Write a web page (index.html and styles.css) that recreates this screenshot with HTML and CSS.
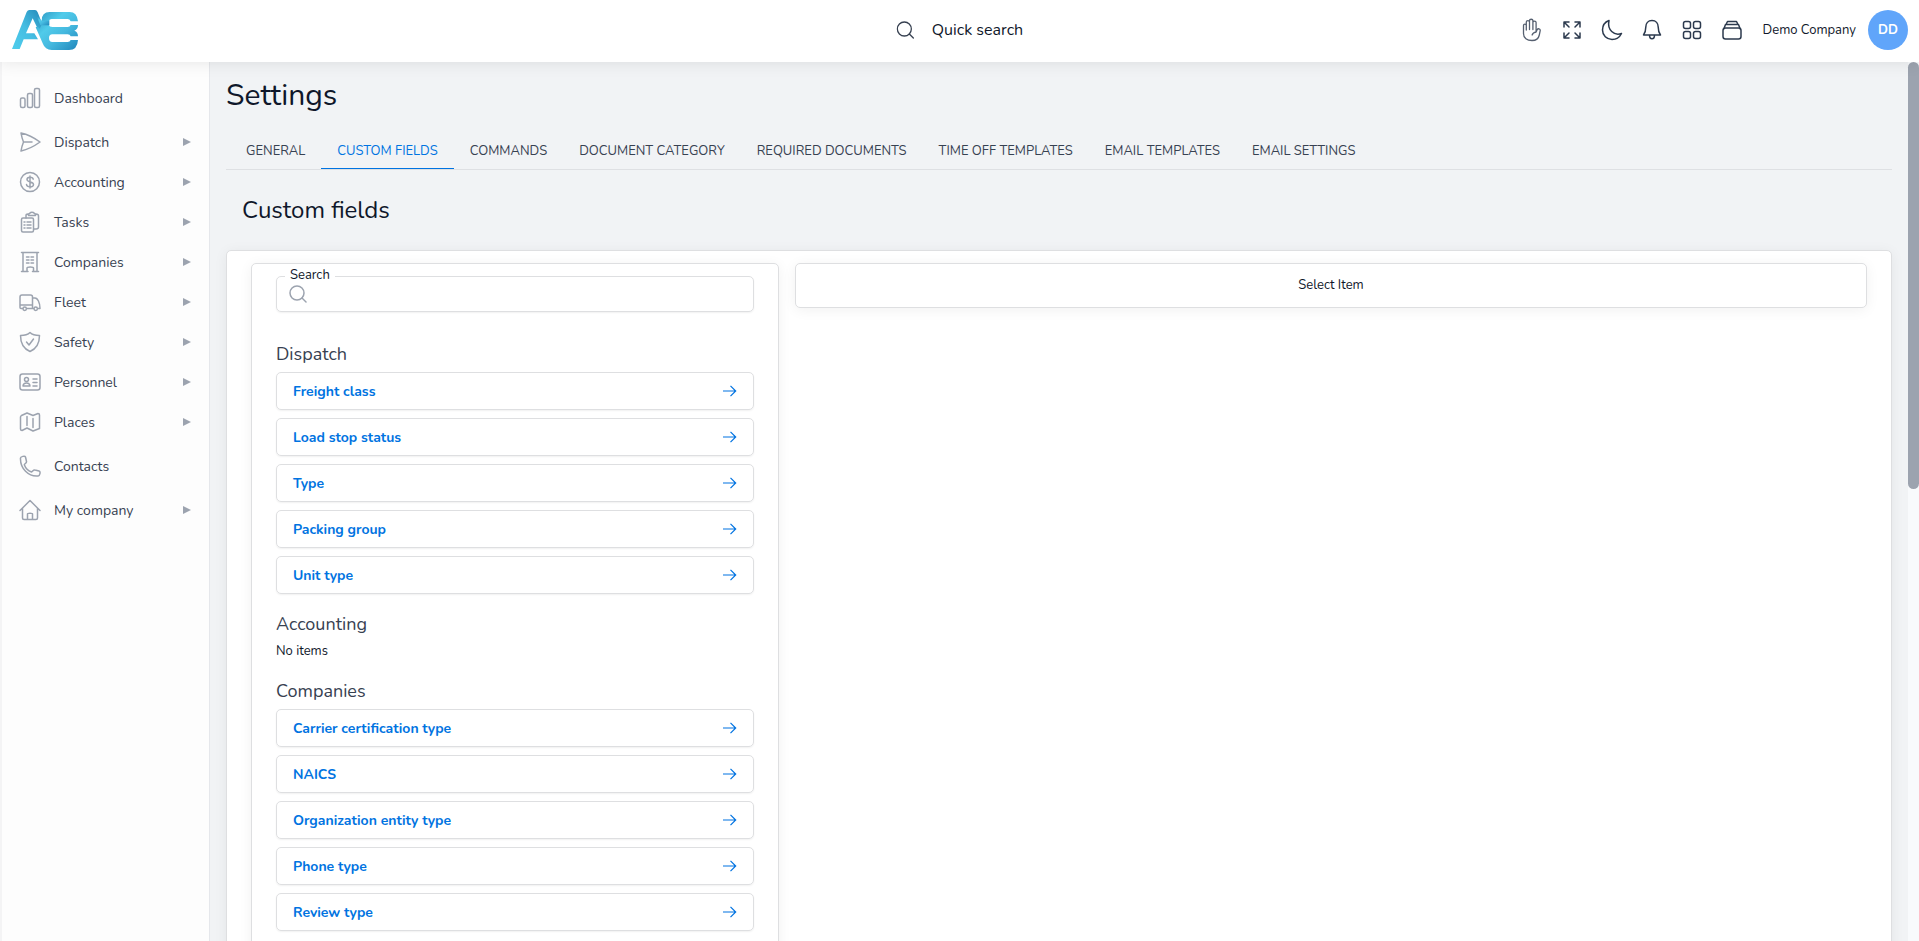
FILE: index.html
```html
<!DOCTYPE html>
<html lang="en">

<head>
  <meta charset="UTF-8">
  <title>Settings</title>
  <link rel="stylesheet" href="styles.css">
</head>

<body>
  <svg class="sprite" aria-hidden="true">
    <symbol id="i-search" viewBox="0 0 18 18">
      <circle cx="8" cy="8" r="7" /><path d="M13 13l4 4" />
    </symbol>
    <symbol id="i-arrow" viewBox="0 0 14 12">
      <path d="M0 6h13M7.500.8L12.700 6l-5.200 5.200" />
    </symbol>
    <symbol id="i-caret" viewBox="0 0 8 8">
      <path d="M0 0l8 4-8 4z" />
    </symbol>
  </svg>

  <header class="header">
    <a class="logo" href="#" aria-label="Home">
      <svg viewBox="39 30 198 120" width="66" height="40">
        <defs>
          <linearGradient id="logo-a" x1="0" y1="1" x2="1" y2="0">
            <stop offset="0" stop-color="#4fcdec" />
            <stop offset=".5" stop-color="#45bde2" />
            <stop offset="1" stop-color="#2288b8" />
          </linearGradient>
          <linearGradient id="logo-b" x1="0" y1="0" x2="1" y2="1">
            <stop offset="0" stop-color="#2a93c0" />
            <stop offset=".35" stop-color="#50cbea" />
            <stop offset=".6" stop-color="#45b9df" />
            <stop offset="1" stop-color="#1f86bb" />
          </linearGradient>
        </defs>
        <path fill="url(#logo-a)" d="M39 147L83 36Q86 30 91 30H108Q113 30 116 37L130 72 122 98 101 55 81 100H106L117 118H74L62 147Z" />
        <path fill="url(#logo-b)" fill-rule="evenodd" d="M128 62Q128 36 152 36H212Q234 36 237 64H215Q212 57 206 57H158Q151 57 150 64H132ZM128 74H149Q151 81 160 81H206Q213 81 215 75H237Q237 88 226 92Q237 96 237 109H215Q213 103 206 103H160Q150 103 150 114Q150 126 160 126H206Q213 126 215 120H237Q235 150 210 150H158Q138 149 132 132L110 82Q116 77 122 86Z" />
        <path fill="url(#logo-b)" d="M113 48L129 62H151V76H124Z" />
      </svg>
    </a>
    <button class="quick-search" type="button">
      <svg class="icon" width="18" height="18"><use href="#i-search" /></svg>
      <span>Quick search</span>
    </button>
    <div class="tools">
      <button class="tool tool-light" type="button" aria-label="Hand">
        <svg class="icon" width="20" height="24" viewBox="0 0 20 24">
          <path d="M1.500 15.500v-8c0-1.800 2.800-1.800 2.800 0V12M4.300 8V4c0-1.800 3.200-1.800 3.200 0v7.500M7.500 4V2.600c0-1.800 3.400-1.800 3.400 0v8.900M10.900 4.500c0-1.800 3.200-1.800 3.200 0V14l1-2.200c.8-1.600 3.400-1.300 3.100.8l-.9 4.400c-.7 3.500-3.500 5.500-7.300 5.500-5 0-8.500-2.500-8.500-7M14.100 14c-2 .3-3.500 1.500-4 3" />
        </svg>
      </button>
      <button class="tool" type="button" aria-label="Full screen">
        <svg class="icon icon-bold" width="20" height="20" viewBox="0 0 20 20">
          <path d="M2 7V2h5M2 2l5 5M13 2h5v5M18 2l-5 5M2 13v5h5M2 18l5-5M18 13v5h-5M18 18l-5-5" />
        </svg>
      </button>
      <button class="tool" type="button" aria-label="Dark mode">
        <svg class="icon icon-bold" width="22" height="22" viewBox="0 0 22 22">
          <path d="M8 1.500C4 3 1.500 6.500 1.500 11c0 5.500 4.200 9.500 9.500 9.500 4 0 7.500-2 9.500-6C13 17 6 11 8 1.500z" />
        </svg>
      </button>
      <button class="tool" type="button" aria-label="Notifications">
        <svg class="icon icon-bold" width="20" height="22" viewBox="0 0 20 22">
          <path d="M10 1.500c-4 0-6.200 3-6.200 6.500 0 4-.8 6-2.300 8h17c-1.500-2-2.300-4-2.300-8 0-3.500-2.200-6.500-6.200-6.500zM7.500 16c0 5 5 5 5 0" />
        </svg>
      </button>
      <button class="tool" type="button" aria-label="Apps">
        <svg class="icon icon-bold" width="20" height="20" viewBox="0 0 20 20">
          <rect x="1.500" y="1.500" width="7" height="7" rx="2" /><rect x="11.500" y="1.500" width="7" height="7" rx="2" />
          <rect x="1.500" y="11.500" width="7" height="7" rx="2" /><rect x="11.500" y="11.500" width="7" height="7" rx="2" />
        </svg>
      </button>
      <button class="tool" type="button" aria-label="Wallet">
        <svg class="icon icon-bold" width="20" height="20" viewBox="0 0 20 20">
          <rect x="1" y="8" width="18" height="11" rx="2.500" />
          <path d="M2 8.500l1.500-4h13l1.500 4M4 4.500l1.500-3h9l1.500 3" />
        </svg>
      </button>
    </div>
    <span class="company">Demo Company</span>
    <button class="avatar" type="button">DD</button>
  </header>

  <div class="layout">
    <nav class="sidebar">
      <a class="nav-item nav-single" href="#">
        <svg class="icon" width="22" height="22" viewBox="0 0 22 22">
          <rect x="1.500" y="11" width="4.500" height="9.500" rx="1.500" /><rect x="8.500" y="6.500" width="5" height="14" rx="1.500" /><rect x="15.500" y="1.500" width="5" height="19" rx="1.500" />
        </svg>
        <span class="nav-text">Dashboard</span>
      </a>
      <a class="nav-item" href="#">
        <svg class="icon" width="22" height="22" viewBox="0 0 22 22">
          <path d="M2 2c7 1.500 13.500 5 19 9-5.500 4-12 7.500-19 9 .5-3 1.300-6 2.500-9C3.300 8 2.500 5 2 2zM4.500 11H13" />
        </svg>
        <span class="nav-text">Dispatch</span>
        <svg class="caret"><use href="#i-caret" /></svg>
      </a>
      <a class="nav-item" href="#">
        <svg class="icon" width="22" height="22" viewBox="0 0 22 22">
          <circle cx="11" cy="11" r="9.500" /><path d="M14.200 8.200C13.800 5.500 8 5.500 8 8.500c0 3.200 6.500 1.700 6.500 5 0 3.200-6.700 3-7 0M11 5v12" />
        </svg>
        <span class="nav-text">Accounting</span>
        <svg class="caret"><use href="#i-caret" /></svg>
      </a>
      <a class="nav-item" href="#">
        <svg class="icon" width="22" height="22" viewBox="0 0 22 22">
          <rect x="2.500" y="7" width="12" height="14" rx="1.500" /><path d="M7 7V4.500C7 3.500 7.500 3 9 3M17 3c1.500 0 2.500.5 2.500 2v11c0 1.500-1 2-2.500 2h-2M9.500 4.500V3c1.500 0 1-1.800 3.500-1.800S15 3 16.500 3v1.500zM5 11h1m2 0h4M5 14h1m2 0h4M5 17h1m2 0h4" />
        </svg>
        <span class="nav-text">Tasks</span>
        <svg class="caret"><use href="#i-caret" /></svg>
      </a>
      <a class="nav-item" href="#">
        <svg class="icon" width="22" height="22" viewBox="0 0 22 22">
          <path d="M2.500 1.500h17M4 1.500v19M18 1.500v19M2.500 20.500H9M13.500 20.500h6M8 20.500V17c0-1.500 6.500-1.500 6.500 0v3.500M7.500 6h2.500m2 0h2.500M7.500 9h2.500m2 0h2.500M7.500 12h2.500m2 0h2.500" />
        </svg>
        <span class="nav-text">Companies</span>
        <svg class="caret"><use href="#i-caret" /></svg>
      </a>
      <a class="nav-item" href="#">
        <svg class="icon" width="22" height="22" viewBox="0 0 22 22">
          <path d="M3.500 17.500H2c-.7 0-1-.5-1-1V6c0-1.500.5-2 2-2h8.500c1.500 0 2 .5 2 2v11.500H8M1 14h12.500M13.500 7H16c2.500 0 5 4.500 5 10.500h-2M13.500 17.500h1" />
          <circle cx="5.700" cy="17.800" r="1.700" /><circle cx="16.700" cy="17.800" r="1.700" />
        </svg>
        <span class="nav-text">Fleet</span>
        <svg class="caret"><use href="#i-caret" /></svg>
      </a>
      <a class="nav-item" href="#">
        <svg class="icon" width="22" height="22" viewBox="0 0 22 22">
          <path d="M11 1.500c-2 2-5.500 3-9.500 3 0 8 2.500 13 9.500 16 7-3 9.500-8 9.500-16-4 0-7.500-1-9.500-3zM7.500 11l2.500 3 4.500-6" />
        </svg>
        <span class="nav-text">Safety</span>
        <svg class="caret"><use href="#i-caret" /></svg>
      </a>
      <a class="nav-item" href="#">
        <svg class="icon" width="22" height="22" viewBox="0 0 22 22">
          <rect x="1" y="3" width="20" height="16" rx="2.500" /><circle cx="7.500" cy="8.500" r="2" /><path d="M4 15c.5-4 6.500-4 7 0zM14 8h4M14 11.500h4M14 15h4" />
        </svg>
        <span class="nav-text">Personnel</span>
        <svg class="caret"><use href="#i-caret" /></svg>
      </a>
      <a class="nav-item" href="#">
        <svg class="icon" width="22" height="22" viewBox="0 0 22 22">
          <path d="M2.500 4.500L8 2l6 2.500L19 2.500c1 0 1.500.5 1.500 1.500v13.500L14 20l-6-3-5 2.500c-1 0-1.500-.5-1.500-1.500V6c0-1 .5-1.200 1-1.500zM8 5.500v9M14 7.500v9" />
        </svg>
        <span class="nav-text">Places</span>
        <svg class="caret"><use href="#i-caret" /></svg>
      </a>
      <a class="nav-item nav-single" href="#">
        <svg class="icon" width="22" height="22" viewBox="0 0 22 22">
          <path d="M1.500 3C1.500 1.500 6 .5 6.500 2l1 4.500c.3 1.500-1.700 2-2.200 3.200C6.500 13 9 15.700 12.500 17c1.200-.5 1.800-2.500 3.500-2l4 1c2 .5.800 5-.8 5C9.500 22 1 13.500 1.500 3z" />
        </svg>
        <span class="nav-text">Contacts</span>
      </a>
      <a class="nav-item" href="#">
        <svg class="icon" width="22" height="22" viewBox="0 0 22 22">
          <path d="M1 11.500L11 1.500l10 10M3.500 9.500V19c0 1 .5 1.500 1.500 1.500h12c1 0 1.500-.5 1.500-1.500V9.500M8.500 20.500V15c0-1 5-1 5 0v5.500" />
        </svg>
        <span class="nav-text">My company</span>
        <svg class="caret"><use href="#i-caret" /></svg>
      </a>
    </nav>

    <main class="main">
      <h1 class="page-title">Settings</h1>
      <nav class="tabs">
        <a class="tab" href="#">GENERAL</a>
        <a class="tab tab-active" href="#">CUSTOM FIELDS</a>
        <a class="tab" href="#">COMMANDS</a>
        <a class="tab" href="#">DOCUMENT CATEGORY</a>
        <a class="tab" href="#">REQUIRED DOCUMENTS</a>
        <a class="tab" href="#">TIME OFF TEMPLATES</a>
        <a class="tab" href="#">EMAIL TEMPLATES</a>
        <a class="tab" href="#">EMAIL SETTINGS</a>
      </nav>
      <h2 class="section-title">Custom fields</h2>

      <div class="card board">
        <section class="card fields">
          <div class="search">
            <label class="search-label" for="field-search">Search</label>
            <svg class="icon" width="18" height="18"><use href="#i-search" /></svg>
            <input class="search-input" type="text" id="field-search">
          </div>

          <h3 class="group-title">Dispatch</h3>
          <div class="group">
            <a class="field" href="#">Freight class<svg class="arrow"><use href="#i-arrow" /></svg></a>
            <a class="field" href="#">Load stop status<svg class="arrow"><use href="#i-arrow" /></svg></a>
            <a class="field" href="#">Type<svg class="arrow"><use href="#i-arrow" /></svg></a>
            <a class="field" href="#">Packing group<svg class="arrow"><use href="#i-arrow" /></svg></a>
            <a class="field" href="#">Unit type<svg class="arrow"><use href="#i-arrow" /></svg></a>
          </div>

          <h3 class="group-title">Accounting</h3>
          <p class="empty">No items</p>

          <h3 class="group-title">Companies</h3>
          <div class="group">
            <a class="field" href="#">Carrier certification type<svg class="arrow"><use href="#i-arrow" /></svg></a>
            <a class="field" href="#">NAICS<svg class="arrow"><use href="#i-arrow" /></svg></a>
            <a class="field" href="#">Organization entity type<svg class="arrow"><use href="#i-arrow" /></svg></a>
            <a class="field" href="#">Phone type<svg class="arrow"><use href="#i-arrow" /></svg></a>
            <a class="field" href="#">Review type<svg class="arrow"><use href="#i-arrow" /></svg></a>
          </div>
        </section>
        <section class="card detail">Select Item</section>
      </div>
    </main>
    <div class="scrollbar">
      <div class="scrollbar-thumb"></div>
    </div>
  </div>
</body>

</html>
```

FILE: styles.css
```css
* {
  box-sizing: border-box;
}

body {
  display: flex;
  flex-direction: column;
  height: 100vh;
  margin: 0;
  overflow: hidden;
  font-family: Nunito, Lato, sans-serif;
  font-size: 13px;
  line-height: 19px;
  color: #0f172a;
  background-color: #f1f3f5;
}

a {
  color: inherit;
  text-decoration: none;
}

button {
  padding: 0;
  border: 0;
  background: none;
  font: inherit;
  color: inherit;
  cursor: pointer;
}

h1,
h2,
h3,
p {
  margin: 0;
  font-weight: 400;
}

.sprite {
  display: none;
}

.icon {
  flex: none;
  fill: none;
  stroke: currentColor;
  stroke-width: 1.3;
  stroke-linecap: round;
  stroke-linejoin: round;
}

.icon-bold {
  stroke-width: 1.5;
}

/* header */
.header {
  display: flex;
  align-items: center;
  flex: none;
  height: 62px;
  padding: 0 11px 2px 12px;
  background-color: #fff;
  box-shadow: 0 0 16px rgba(0, 0, 0, .1);
  position: relative;
  z-index: 1;
}

.logo {
  display: flex;
}

/* centred over the bar, whatever stands at its sides */
.quick-search {
  position: absolute;
  left: 50%;
  transform: translateX(-50%);
  display: flex;
  align-items: center;
  gap: 18px;
  font-size: 16px;
}

.quick-search .icon {
  color: #374151;
}

.tools {
  display: flex;
  margin-left: auto;
}

.tool {
  display: flex;
  align-items: center;
  justify-content: center;
  width: 40px;
  height: 40px;
  color: #2c3a4e;
}

.tool-light {
  color: #566070;
}

.company {
  margin: 0 12px 0 11px;
}

.avatar {
  width: 40px;
  height: 40px;
  border-radius: 50%;
  background-color: #60a5fa;
  color: #fff;
  font-weight: 700;
}

/* sidebar */
.layout {
  display: flex;
  flex: 1;
  min-height: 0;
}

.sidebar {
  flex: none;
  width: 210px;
  padding-top: 12px;
  border-left: 2px solid #f4f4f5;
  border-right: 1px solid #e5e7eb;
  background-color: #fdfdfd;
}

.nav-item {
  display: flex;
  align-items: center;
  height: 40px;
  padding: 0 18px 0 17px;
  font-size: 14px;
  color: #374151;
}

.nav-single {
  height: 48px;
}

.nav-item .icon {
  margin-right: 13px;
  color: #9ca3af;
  stroke-width: 1.5;
}

.nav-text {
  flex: 1;
}

.caret {
  flex: none;
  width: 8px;
  height: 8px;
  fill: #9ca3af;
}

/* content */
.main {
  flex: 1;
  min-width: 0;
  padding: 14px 16px 0;
  overflow: hidden;
}

.page-title {
  font-size: 30px;
  line-height: 40px;
}

.tabs {
  display: flex;
  margin-top: 18px;
  padding-left: 4px;
  border-bottom: 1px solid #dee0e3;
}

.tab {
  padding: 8px 16px 7px;
  border-bottom: 1px solid transparent;
  color: #374151;
}

.tab-active {
  border-color: #0073e1;
  color: #0073e1;
}

.section-title {
  padding: 24px 16px;
  font-size: 24px;
  line-height: 32px;
}

.card {
  border: 1px solid #dedfe1;
  border-radius: 5px;
  background-color: #fff;
  box-shadow: 0 2px 14px rgba(0, 0, 0, .06);
}

.board {
  display: grid;
  grid-template-columns: repeat(12, 1fr);
  gap: 16px;
  align-items: start;
  min-height: 100%;
  padding: 12px 24px;
}

.fields {
  grid-column: span 4;
  min-height: 100%;
  padding: 12px 24px;
}

.detail {
  grid-column: span 8;
  padding: 12px;
  text-align: center;
}

.search,
.field {
  display: flex;
  align-items: center;
  border: 1px solid #dedfe1;
  border-radius: 5px;
  box-shadow: 0 1px 2px rgba(0, 0, 0, .06);
}

.search {
  position: relative;
  height: 36px;
  margin-bottom: 28px;
  padding: 0 12px;
  color: #9ca3af;
}

/* sits on the top border of the box */
.search-label {
  position: absolute;
  top: -11px;
  left: 8px;
  padding: 0 5px;
  background-color: #fff;
  color: #0f172a;
}

.search .icon {
  stroke-width: 1.5;
}

.search-input {
  flex: 1;
  min-width: 0;
  padding: 0 8px;
  border: 0;
  outline: none;
  background: none;
  font: inherit;
}

.group-title {
  padding-bottom: 4px;
  font-size: 18px;
  line-height: 28px;
  color: #374151;
}

.group {
  display: flex;
  flex-direction: column;
  gap: 8px;
  margin-bottom: 16px;
}

.field {
  justify-content: space-between;
  height: 38px;
  padding: 0 16px;
  font-size: 14px;
  font-weight: 700;
  color: #0073e1;
}

.arrow {
  width: 14px;
  height: 12px;
  fill: none;
  stroke: currentColor;
  stroke-width: 1.2;
}

.empty {
  margin-bottom: 16px;
}

/* scrollbar */
.scrollbar {
  flex: none;
  width: 11px;
  background-color: #f8fafc;
}

.scrollbar-thumb {
  height: 48.6%;
  border-radius: 6px;
  background-color: #9ca3af;
}
```
